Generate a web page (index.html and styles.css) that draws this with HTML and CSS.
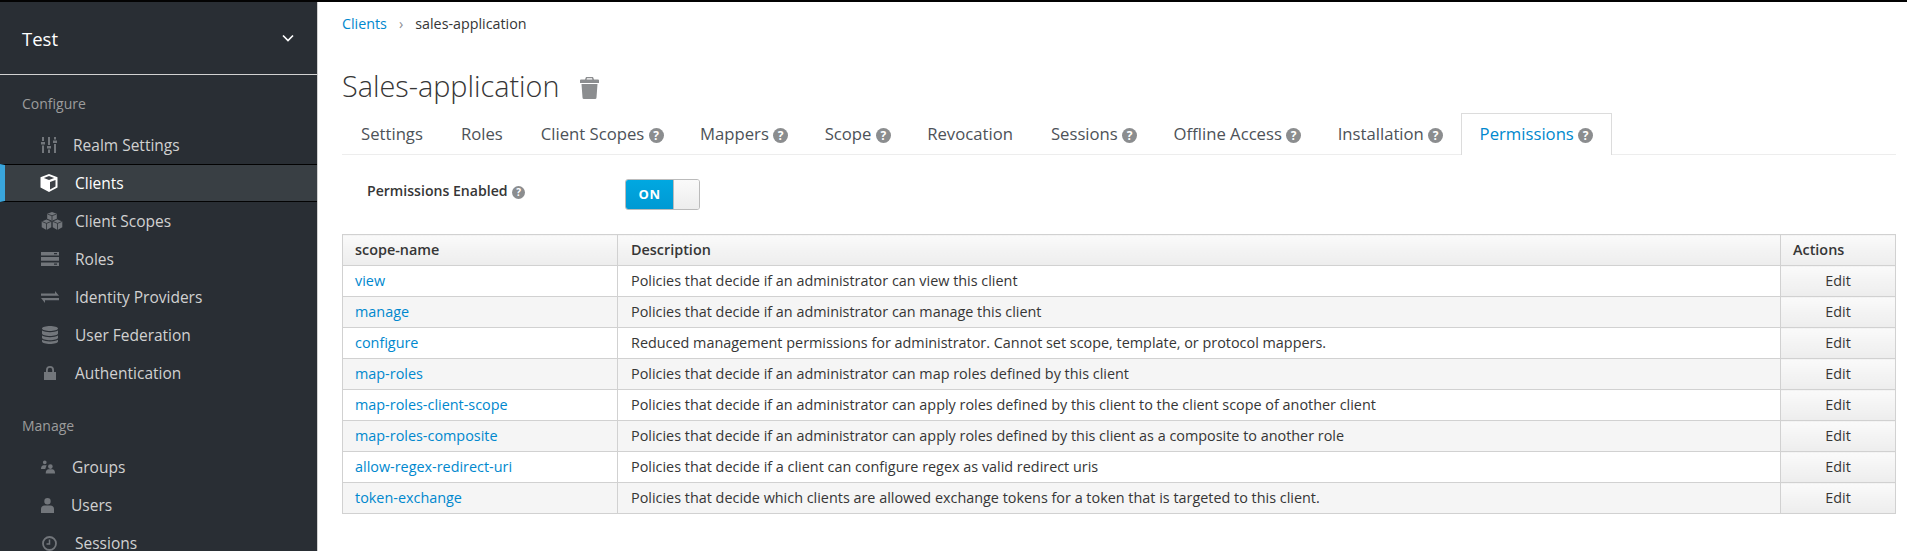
FILE: index.html
```html
<!DOCTYPE html>
<html>
<head>
    <title>Sales-application</title>
    <link rel="stylesheet" href="styles.css">
</head>
<body>
    <div class="page">
        <aside class="sidebar">
            <div class="realm">
                <span>Test</span>
                <svg class="chevron" viewBox="0 0 12 8"><path d="M1 1.500l5 5 5-5" fill="none" stroke="#fff" stroke-width="1.700"/></svg>
            </div>
            <h4 class="nav-title">Configure</h4>
            <ul class="nav">
                <li class="nav-item">
                    <span class="nav-slot"><svg class="icon-sliders" viewBox="0 0 16 16"><path fill="#72767b" d="M1 0h2v4H1zM0 5h4v2.500H0zM1 8.500h2V16H1zM7 0h2v8H7zM6 9h4v2.500H6zM7 12.500h2V16H7zM13 0h2v2.500h-2zM12 3.500h4V6h-4zM13 7h2v9h-2z"/></svg></span>
                    <a class="nav-link link-realm">Realm Settings</a>
                </li>
                <li class="nav-item active">
                    <span class="nav-slot"><svg class="icon-cube" viewBox="0 0 18 18"><path fill="#fff" d="M9 0l8.500 3.200v10.300L9 18 .5 13.500V3.200z"/><path fill="#292e34" d="M9 2L3.800 4 9 6l5.200-2zM10 8v7.500l5.500-3V6z" fill-opacity=".9"/></svg></span>
                    <a class="nav-link">Clients</a>
                </li>
                <li class="nav-item">
                    <span class="nav-slot"><svg class="icon-cubes" viewBox="0 0 22 18"><path fill="#72767b" d="M11 0l4.800 1.800v5L11 8.700 6.200 6.800v-5zM5.500 7.500l4.800 1.900v5.800L5.500 18 .7 15.200V9.400zM16.500 7.500l4.800 1.900v5.800L16.500 18l-4.800-2.800V9.400z"/><path fill="none" stroke="#292e34" stroke-width=".8" d="M6.500 2L11 3.800 15.500 2M11 3.800v4.500M1 9.500l4.500 1.900L10 9.500M5.500 11.400V18M12 9.500l4.500 1.900L21 9.500M16.500 11.400V18"/></svg></span>
                    <a class="nav-link">Client Scopes</a>
                </li>
                <li class="nav-item">
                    <span class="nav-slot"><svg class="icon-server" viewBox="0 0 18 14"><path fill="#72767b" fill-rule="evenodd" d="M0 0h18v3.500H0zM13 1v1.200h3V1zM0 5h18v3.800H0zM0 10.500h18V14H0zM13 11.500v1.200h3v-1.200z"/></svg></span>
                    <a class="nav-link">Roles</a>
                </li>
                <li class="nav-item">
                    <span class="nav-slot"><svg class="icon-exchange" viewBox="0 0 18 12"><path fill="#72767b" d="M0 2.500h14V0l4 4.700H0zM0 7h18v2.200H4V12z"/></svg></span>
                    <a class="nav-link">Identity Providers</a>
                </li>
                <li class="nav-item">
                    <span class="nav-slot"><svg class="icon-db" viewBox="0 0 16 18"><path fill="#72767b" d="M8 0c4 0 8 1 8 2.500S12 5 8 5 0 4 0 2.500 4 0 8 0zM0 4.500c2 1.300 5 1.700 8 1.700s6-.4 8-1.700v3C16 9 12 10 8 10S0 9 0 7.500zM0 9.500c2 1.300 5 1.700 8 1.700s6-.4 8-1.700v2.300C16 13.300 12 14.300 8 14.300S0 13.300 0 11.800zM0 13.800c2 1.300 5 1.700 8 1.700s6-.4 8-1.700V15.500c0 1.500-4 2.500-8 2.500s-8-1-8-2.500z"/></svg></span>
                    <a class="nav-link">User Federation</a>
                </li>
                <li class="nav-item">
                    <span class="nav-slot"><svg class="icon-lock" viewBox="0 0 12 14"><path fill="#72767b" d="M6 0a4 4 0 0 1 4 4v2h2v8H0V6h2V4a4 4 0 0 1 4-4zm0 1.800A2.200 2.200 0 0 0 3.800 4v2h4.400V4A2.200 2.200 0 0 0 6 1.800z"/></svg></span>
                    <a class="nav-link">Authentication</a>
                </li>
            </ul>
            <h4 class="nav-title nav-title-manage">Manage</h4>
            <ul class="nav">
                <li class="nav-item">
                    <span class="nav-slot"><svg class="icon-users" viewBox="0 0 16 14"><path fill="#72767b" d="M4 0a2 2 0 1 1 0 4 2 2 0 0 1 0-4zM0 9c0-2.500 1-4 3-4h3L4.500 9zM10 4a2.500 2.500 0 1 1 0 5 2.500 2.500 0 0 1 0-5zM5 14c0-3 1.500-4.500 3-4.500h4c1.500 0 3 1.500 3 4.500z"/></svg></span>
                    <a class="nav-link link-groups">Groups</a>
                </li>
                <li class="nav-item">
                    <span class="nav-slot"><svg class="icon-user" viewBox="0 0 13 15"><path fill="#72767b" d="M6.500 0a3.200 3.200 0 1 1 0 6.400 3.200 3.200 0 0 1 0-6.400zM0 15v-4c0-2 1.500-3.500 3.500-3.500h6c2 0 3.500 1.500 3.500 3.500v4z"/></svg></span>
                    <a class="nav-link link-users">Users</a>
                </li>
                <li class="nav-item">
                    <span class="nav-slot"><svg class="icon-clock" viewBox="0 0 15 15"><circle cx="7.500" cy="7.500" r="6.500" fill="none" stroke="#72767b" stroke-width="1.800"/><path d="M7.500 3.500v4.500H4.500" fill="none" stroke="#72767b" stroke-width="1.500"/></svg></span>
                    <a class="nav-link">Sessions</a>
                </li>
            </ul>
        </aside>

        <main class="content">
            <ol class="breadcrumb">
                <li><a href="#">Clients</a></li>
                <li class="crumb-sep">›</li>
                <li>sales-application</li>
            </ol>

            <h1 class="title">
                Sales-application
                <svg class="trash" viewBox="0 0 19 22"><path fill="#8b8d8f" fill-rule="evenodd" d="M6 0h7l1 2.500h4a1 1 0 0 1 1 1V6H0V3.500a1 1 0 0 1 1-1h4zM7 1.300l-.4 1.200h5.800L12 1.300zM1.500 7h16l-1 13.500a1.500 1.500 0 0 1-1.500 1.500H4a1.500 1.500 0 0 1-1.500-1.500z"/></svg>
            </h1>

            <ul class="tabs">
                <li class="tab"><a>Settings</a></li>
                <li class="tab"><a>Roles</a></li>
                <li class="tab"><a>Client Scopes <i class="help">?</i></a></li>
                <li class="tab"><a>Mappers <i class="help">?</i></a></li>
                <li class="tab"><a>Scope <i class="help">?</i></a></li>
                <li class="tab"><a>Revocation</a></li>
                <li class="tab"><a>Sessions <i class="help">?</i></a></li>
                <li class="tab"><a>Offline Access <i class="help">?</i></a></li>
                <li class="tab"><a>Installation <i class="help">?</i></a></li>
                <li class="tab tab-active"><a>Permissions <i class="help">?</i></a></li>
            </ul>

            <div class="form-row">
                <label class="form-label">Permissions Enabled <i class="help help-small">?</i></label>
                <div class="switch">
                    <span class="switch-on">ON</span>
                    <span class="switch-knob"></span>
                </div>
            </div>

            <table class="grid">
                <thead>
                    <tr>
                        <th class="col-name">scope-name</th>
                        <th>Description</th>
                        <th class="col-actions">Actions</th>
                    </tr>
                </thead>
                <tbody>
                    <tr>
                        <td><a href="#">view</a></td>
                        <td>Policies that decide if an administrator can view this client</td>
                        <td class="edit">Edit</td>
                    </tr>
                    <tr>
                        <td><a href="#">manage</a></td>
                        <td>Policies that decide if an administrator can manage this client</td>
                        <td class="edit">Edit</td>
                    </tr>
                    <tr>
                        <td><a href="#">configure</a></td>
                        <td>Reduced management permissions for administrator. Cannot set scope, template, or protocol mappers.</td>
                        <td class="edit">Edit</td>
                    </tr>
                    <tr>
                        <td><a href="#">map-roles</a></td>
                        <td>Policies that decide if an administrator can map roles defined by this client</td>
                        <td class="edit">Edit</td>
                    </tr>
                    <tr>
                        <td><a href="#">map-roles-client-scope</a></td>
                        <td>Policies that decide if an administrator can apply roles defined by this client to the client scope of another client</td>
                        <td class="edit">Edit</td>
                    </tr>
                    <tr>
                        <td><a href="#">map-roles-composite</a></td>
                        <td>Policies that decide if an administrator can apply roles defined by this client as a composite to another role</td>
                        <td class="edit">Edit</td>
                    </tr>
                    <tr>
                        <td><a href="#">allow-regex-redirect-uri</a></td>
                        <td>Policies that decide if a client can configure regex as valid redirect uris</td>
                        <td class="edit">Edit</td>
                    </tr>
                    <tr>
                        <td><a href="#">token-exchange</a></td>
                        <td>Policies that decide which clients are allowed exchange tokens for a token that is targeted to this client.</td>
                        <td class="edit">Edit</td>
                    </tr>
                </tbody>
            </table>
        </main>
    </div>
</body>
</html>
```

FILE: styles.css
```css
html, body {
    margin: 0;
    height: 100%;
    overflow: hidden;
}

body {
    font-family: "Open Sans", Arial, sans-serif;
    font-size: 14px;
    color: #363636;
    background-color: #fff;
    border-top: 2px solid #030303;
    box-sizing: border-box;
}

a {
    color: #0088ce;
    text-decoration: none;
}

.page {
    display: flex;
    height: 549px;
}

/* sidebar */
.sidebar {
    width: 317px;
    flex-shrink: 0;
    background-color: #292e34;
    border-right: 1px solid #d1d1d1;
    overflow: hidden;
}

.realm {
    display: flex;
    align-items: center;
    justify-content: space-between;
    height: 72px;
    padding: 0 23px 0 22px;
    border-bottom: 1px solid #d1d1d1;
    color: #fff;
    font-size: 18.500px;
}

.chevron {
    width: 12px;
    height: 8px;
}

.nav-title {
    margin: 0;
    padding: 19px 0 0 22px;
    height: 32px;
    line-height: 20px;
    font-size: 14px;
    font-weight: 400;
    color: #9c9c9c;
}

.nav-title-manage {
    padding-top: 24px;
}

.nav {
    list-style: none;
    margin: 0;
    padding: 0;
}

.nav-item {
    display: flex;
    align-items: center;
    height: 38px;
    box-sizing: border-box;
    padding-left: 41px;
    font-size: 15.500px;
}

.nav-slot {
    display: flex;
    align-items: center;
    width: 34px;
    flex-shrink: 0;
}

.nav-link {
    color: #d1d1d1;
}

.link-realm {
    margin-left: -2px;
}

.link-groups {
    margin-left: -3px;
}

.link-users {
    margin-left: -4px;
}

.icon-sliders {
    width: 16px;
    height: 16px;
}

.icon-cube {
    width: 18px;
    height: 18px;
    margin-left: -1px;
}

.icon-cubes {
    width: 22px;
    height: 18px;
}

.icon-server {
    width: 18px;
    height: 14px;
}

.icon-exchange {
    width: 18px;
    height: 12px;
}

.icon-db {
    width: 16px;
    height: 18px;
    margin-left: 1px;
}

.icon-lock {
    width: 12px;
    height: 14px;
    margin-left: 3px;
}

.icon-users {
    width: 15px;
    height: 14px;
}

.icon-user {
    width: 13px;
    height: 15px;
}

.icon-clock {
    width: 15px;
    height: 15px;
    margin-left: 1px;
}

.active {
    background-color: #393f44;
    border-top: 1px solid #030303;
    border-bottom: 1px solid #030303;
    border-left: 5px solid #39a5dc;
    padding-left: 36px;
}

.active .nav-link {
    color: #fff;
}

/* main area */
.content {
    flex: 1;
    padding: 0 11px 0 24px;
    min-width: 0;
}

.breadcrumb {
    display: flex;
    list-style: none;
    margin: 0;
    padding: 12px 0 0;
    height: 30px;
    line-height: 19px;
    font-size: 14.300px;
}

.crumb-sep {
    color: #8b8d8f;
    margin: 0 12px;
}

.title {
    display: flex;
    align-items: center;
    margin: 22px 0 0;
    height: 39px;
    font-size: 28.800px;
    font-weight: 300;
    color: #363636;
}

.trash {
    width: 19px;
    height: 22px;
    margin-left: 20px;
    margin-top: 4px;
}

.tabs {
    display: flex;
    list-style: none;
    margin: 8px 0 0;
    padding: 0;
    height: 41px;
    border-bottom: 1px solid #ededed;
}

.tab {
    height: 41px;
    box-sizing: border-box;
    padding: 8px 18px 0;
    line-height: 24px;
    font-size: 16.700px;
    white-space: nowrap;
    border: 1px solid transparent;
    border-bottom: 0;
}

.tab a {
    color: #4d5258;
}

.tab-active {
    height: 42px;
    background-color: #fff;
    border-color: #dcdcdc;
}

.tab-active a {
    color: #0088ce;
}

.help {
    display: inline-block;
    width: 15px;
    height: 15px;
    margin-right: -1.600px;
    border-radius: 50%;
    background-color: #8b8d8f;
    color: #fff;
    font-style: normal;
    font-weight: 700;
    font-size: 12px;
    line-height: 15px;
    text-align: center;
}

.tab-active .help {
    margin-right: 0;
}

.help-small {
    width: 13px;
    height: 13px;
    margin-left: 1px;
    font-size: 10px;
    line-height: 13px;
}

.form-row {
    display: flex;
    align-items: flex-start;
    height: 79px;
    padding-left: 25px;
}

.form-label {
    width: 258px;
    margin-top: 26px;
    line-height: 20px;
    font-weight: 600;
    font-size: 14.100px;
}

.switch {
    display: flex;
    width: 75px;
    height: 31px;
    margin-top: 24px;
    box-sizing: border-box;
    border: 1px solid #bbb;
    border-radius: 3px;
    overflow: hidden;
}

.switch-on {
    width: 47px;
    background: linear-gradient(#00a8e1, #0099d3);
    color: #fff;
    font-weight: 700;
    font-size: 13px;
    letter-spacing: 0.5px;
    line-height: 29px;
    text-align: center;
}

.switch-knob {
    flex: 1;
    border-left: 1px solid #bbb;
    background: linear-gradient(#fafafa, #ededed);
}

.grid {
    width: 1554px;
    border-collapse: collapse;
    table-layout: fixed;
    font-size: 14.400px;
}

.grid th,
.grid td {
    height: 31px;
    box-sizing: border-box;
    padding: 0 12px 2px;
    border: 1px solid #d1d1d1;
    text-align: left;
    white-space: nowrap;
}

.grid th:nth-child(2),
.grid td:nth-child(2) {
    padding-left: 13px;
}

.grid th {
    font-weight: 600;
    background: linear-gradient(#fafafa, #ededed);
}

.col-name {
    width: 275px;
}

.col-actions {
    width: 115px;
}

.grid tbody tr:nth-child(even) td {
    background-color: #f5f5f5;
}

.grid td.edit,
.grid tbody tr:nth-child(even) td.edit {
    background: linear-gradient(#fafafa, #ededed);
    text-align: center;
}
```
